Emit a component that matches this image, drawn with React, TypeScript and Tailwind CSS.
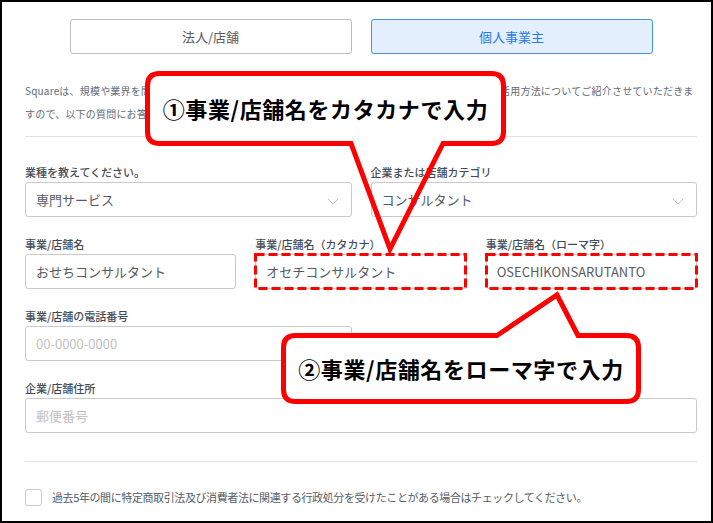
import React from "react";

const font = "font-['Noto_Sans_CJK_JP','Noto_Sans',sans-serif]";

const Label: React.FC<{ children: React.ReactNode }> = ({ children }) => (
  <div className="mb-[2px] text-[11px] leading-4 font-medium text-[#434b58]">{children}</div>
);

const Chevron = () => (
  <svg width="12" height="7" viewBox="0 0 12 7" className="absolute right-[12px] top-[15px]">
    <polyline points="1,1 6,6 11,1" fill="none" stroke="#c4c4c4" strokeWidth="1" />
  </svg>
);

const Field: React.FC<{ value?: string; placeholder?: string; select?: boolean }> = ({
  value,
  placeholder,
  select,
}) => (
  <div className="relative flex h-[35px] items-center rounded-[3px] border border-[#c9c9c9] bg-white pl-[10px]">
    {value ? (
      <span className="text-[13px] text-[#555b64]">{value}</span>
    ) : (
      <span className="text-[13px] text-[#c2c2c2]">{placeholder}</span>
    )}
    {select && <Chevron />}
  </div>
);

const Dashed = () => (
  <svg className="pointer-events-none absolute -left-[1px] -top-[1px]" width="213" height="37">
    <rect x="1.5" y="1.5" width="210" height="34" fill="none" stroke="#ff0000" strokeWidth="3" strokeDasharray="9 4" />
  </svg>
);

export default function App() {
  return (
    <div className={`relative h-[523px] w-[713px] bg-white ${font}`}>
      <div className="h-full w-full border-2 border-black pl-[23px] pr-[14px] pt-[17px]">
        <div className="flex justify-center gap-[19px]">
          <div className="flex h-[35px] w-[282px] items-center justify-center rounded-[3px] border border-[#bdbdbd] text-[13px] text-[#555b64]">
            法人/店舗
          </div>
          <div className="flex h-[35px] w-[282px] items-center justify-center rounded-[3px] border border-[#4a90e2] bg-[#e4effd] text-[13px] text-[#2a7ae2]">
            個人事業主
          </div>
        </div>

        <p className="mt-[25px] whitespace-nowrap text-[10px] leading-[23px] tracking-[0.2px] text-[#636b78]">
          Squareは、規模や業界を問わず、さまざまなビジネスでお使いいただけます。お客様に合ったSquareの活用方法についてご紹介させていただきま
          <br />
          すので、以下の質問にお答えください。
        </p>

        <div className="mt-[11px] h-px bg-[#e2e2e2]" />

        <div className="mt-[27px] flex flex-col gap-[19px]">
          <div className="grid grid-cols-2 gap-[19px]">
            <div>
              <Label>業種を教えてください。</Label>
              <Field value="専門サービス" select />
            </div>
            <div>
              <Label>企業または店舗カテゴリ</Label>
              <Field value="コンサルタント" select />
            </div>
          </div>

          <div className="grid grid-cols-3 gap-[19px]">
            <div>
              <Label>事業/店舗名</Label>
              <Field value="おせちコンサルタント" />
            </div>
            <div>
              <Label>事業/店舗名（カタカナ）</Label>
              <div className="relative">
                <Field value="オセチコンサルタント" />
                <Dashed />
              </div>
            </div>
            <div>
              <Label>事業/店舗名（ローマ字）</Label>
              <div className="relative">
                <Field value="OSECHIKONSARUTANTO" />
                <Dashed />
              </div>
            </div>
          </div>

          <div className="grid grid-cols-2 gap-[19px]">
            <div>
              <Label>事業/店舗の電話番号</Label>
              <Field placeholder="00-0000-0000" />
            </div>
          </div>

          <div>
            <Label>企業/店舗住所</Label>
            <Field placeholder="郵便番号" />
          </div>
        </div>

        <div className="mt-[28px] h-px bg-[#e2e2e2]" />

        <div className="mt-[27px] flex items-center gap-[10px]">
          <div className="h-[17px] w-[17px] rounded-[3px] border border-[#c9c9c9]" />
          <span className="text-[11px] tracking-[-0.4px] text-[#555b64]">
            過去5年の間に特定商取引法及び消費者法に関連する行政処分を受けたことがある場合はチェックしてください。
          </span>
        </div>
      </div>

      {/* callouts */}
      <svg className="pointer-events-none absolute left-0 top-0" width="713" height="523">
        <rect x="147.5" y="73.5" width="356" height="70" rx="12" fill="#fff" />
        <path
          d="M 443 143.5 L 390 249 L 351 143.5 H 159.5 Q 147.5 143.5 147.5 131.5 V 85.5 Q 147.5 73.5 159.5 73.5 H 491.5 Q 503.5 73.5 503.5 85.5 V 131.5 Q 503.5 143.5 491.5 143.5 Z"
          fill="none"
          stroke="#ff0000"
          strokeWidth="5"
          strokeLinejoin="miter"
          strokeMiterlimit="10"
        />
        <rect x="283.5" y="335.5" width="355" height="66" rx="12" fill="#fff" />
        <path
          d="M 497 335.5 L 557 295 L 578 335.5 H 626.5 Q 638.5 335.5 638.5 347.5 V 389.5 Q 638.5 401.5 626.5 401.5 H 295.5 Q 283.5 401.5 283.5 389.5 V 347.5 Q 283.5 335.5 295.5 335.5 Z"
          fill="none"
          stroke="#ff0000"
          strokeWidth="5"
          strokeLinejoin="miter"
          strokeMiterlimit="10"
        />
      </svg>
      <div className="absolute left-[145px] top-[71px] flex h-[75px] w-[361px] items-center justify-center text-[22px] font-bold tracking-[0.6px] text-black">
        ①事業/店舗名をカタカナで入力
      </div>
      <div className="absolute left-[281px] top-[333px] flex h-[70px] w-[360px] items-center justify-center text-[22px] font-bold tracking-[0.6px] text-black">
        ②事業/店舗名をローマ字で入力
      </div>
    </div>
  );
}
